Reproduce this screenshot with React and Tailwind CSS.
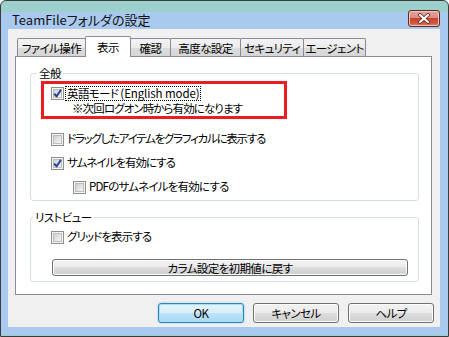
import React from 'react';

const font = "font-['Noto_Sans_CJK_JP','Noto_Sans_CJK_SC',sans-serif] [font-feature-settings:'palt']";

const CheckBox = ({ checked }) => (
  <span className="relative flex h-[13px] w-[13px] shrink-0 items-center justify-center border border-[#8f8f8f] bg-[#f4f4f4]">
    <span className="h-[9px] w-[9px] border border-[#bcbcbc] bg-[linear-gradient(135deg,#cfcfcf,#f7f7f7)]" />
    {checked && (
      <svg className="absolute left-0 top-0" width="11" height="11" viewBox="0 0 11 11">
        <path d="M2.2 5.6 L4.6 8.4 L9 1.8" stroke="#24408e" strokeWidth="1.9" fill="none" strokeLinejoin="round" />
      </svg>
    )}
  </span>
);

const Row = ({ checked, label, indent, textClass = '' }) => (
  <div className={`flex h-[24px] items-center ${indent ? 'pl-[22px]' : ''}`}>
    <CheckBox checked={checked} />
    <span className={`ml-[3px] whitespace-nowrap ${textClass}`}>{label}</span>
  </div>
);

const Tab = ({ label, width, active, first }) => (
  <div
    className={`flex items-start justify-center border border-b-0 border-[#898c95] rounded-t-[2px] ${first ? '' : '-ml-px'} ${
      active
        ? 'relative z-10 -mb-px h-[21px] bg-white pt-[2px]'
        : 'h-[18px] bg-[linear-gradient(#f3f3f3,#ebebeb_50%,#dcdcdc_50%,#d6d6d6)] pt-[1px]'
    }`}
    style={{ width }}
  >
    <span className="whitespace-nowrap leading-[16px]">{label}</span>
  </div>
);

const GroupBox = ({ label, labelLeft, className, children }) => (
  <div className={`relative ml-[14px] w-[389px] rounded-[3px] border border-[#d5dfe5] pl-[20px] ${className}`}>
    <span className={`absolute -top-[9px] bg-white px-[2px] leading-[16px] ${labelLeft}`}>{label}</span>
    {children}
  </div>
);

const DialogButton = ({ children, primary }) => (
  <button
    type="button"
    className={`flex h-[20px] w-[86px] items-center justify-center rounded-[3px] border leading-[16px] ${
      primary
        ? 'border-[#3c7fb1] bg-[linear-gradient(#e5f4fc,#d7eefb_50%,#bde4f8_50%,#a9d8f3)] shadow-[inset_0_0_0_1px_#9fe0ff,0_0_2px_#5cc8ff]'
        : 'border-[#707070] bg-[linear-gradient(#f2f2f2,#ebebeb_50%,#dddddd_50%,#cfcfcf)] shadow-[inset_0_0_0_1px_#fcfcfc]'
    }`}
  >
    {children}
  </button>
);

export default function App() {
  return (
    <div className={`h-[337px] w-[449px] overflow-hidden text-[11.5px] tracking-[-0.6px] text-black ${font}`}>
      <div className="flex h-full w-full flex-col rounded-t-[6px] border border-[#3b3b3b] bg-[linear-gradient(#9dd0cc_0,#9dd0cc_11px,#a9c9ef_11px)]">
        {/* title bar */}
        <div className="flex h-[28px] shrink-0 items-start justify-between pl-[11px] pr-[8px]">
          <span className="mt-[10px] whitespace-nowrap text-[13px] leading-[17px] tracking-normal text-[#111]">
            TeamFileフォルダの設定
          </span>
          <div className="mt-[9px] flex h-[17px] w-[32px] items-center justify-center rounded-[3px] border border-[#5e2a28] bg-[linear-gradient(#e2a59e,#d88b82_45%,#c6452f_50%,#d1553a_80%,#e08a6a)] shadow-[inset_0_0_0_1px_#efc4bd]">
            <svg width="14" height="11" viewBox="0 0 14 11">
              <path d="M3 2 L11 9 M11 2 L3 9" stroke="#5a2a26" strokeWidth="3.6" strokeLinecap="round" />
              <path d="M3 2 L11 9 M11 2 L3 9" stroke="#ffffff" strokeWidth="2" strokeLinecap="round" />
            </svg>
          </div>
        </div>

        <div className="flex h-[298px] shrink-0">
          <div className="w-[7px] shrink-0" />
          {/* client area */}
          <div className="flex w-[432px] shrink-0 flex-col bg-[#f0f0f0] pl-[7px]">
            <div className="ml-[2px] mt-[7px] flex h-[20px] items-end">
              <Tab first label="ファイル操作" width={69} />
              <Tab active label="表示" width={46} />
              <Tab label="確認" width={41} />
              <Tab label="高度な設定" width={71} />
              <Tab label="セキュリティ" width={64} />
              <Tab label="エージェント" width={63} />
            </div>

            <div className="h-[239px] w-[417px] border border-[#898c95] bg-white">
              <GroupBox label="全般" labelLeft="left-[6px]" className="mt-[16px] pb-[1px] pt-[7px]">
                <div className="-ml-[10px] h-[38px] w-[246px] border-[3px] border-[#ec1c24] pl-[7px] pt-[1px]">
                  <div className="flex h-[16px] items-center">
                    <CheckBox checked />
                    <span className="ml-[1px] whitespace-nowrap border border-dotted border-black px-[1px] leading-[13px]">
                      英語モード <span className="tracking-[-0.1px]">(English mode)</span>
                    </span>
                  </div>
                  <div className="h-[14px] whitespace-nowrap pl-[21px] leading-[14px] tracking-[-0.9px]">※次回ログオン時から有効になります</div>
                </div>
                <div className="mt-[8px]">
                  <Row label="ドラッグしたアイテムをグラフィカルに表示する" textClass="tracking-[-1.25px]" />
                  <Row checked label="サムネイルを有効にする" textClass="tracking-[-1px]" />
                  <Row indent label="PDFのサムネイルを有効にする" textClass="tracking-[-0.8px]" />
                </div>
              </GroupBox>

              <GroupBox label="リストビュー" labelLeft="left-[2px]" className="mt-[16px] pb-[5px] pt-[7px]">
                <Row label="グリッドを表示する" textClass="tracking-[-0.9px]" />
                <button
                  type="button"
                  className="ml-[1px] mt-[10px] flex h-[17px] w-[356px] items-center justify-center rounded-[3px] border border-[#707070] bg-[linear-gradient(#f2f2f2,#ebebeb_50%,#dddddd_50%,#cfcfcf)] leading-[14px] shadow-[inset_0_0_0_1px_#fcfcfc]"
                >
                  カラム設定を初期値に戻す
                </button>
              </GroupBox>
            </div>

            <div className="mt-[8px] flex justify-end gap-[9px] pr-[6px]">
              <DialogButton primary>OK</DialogButton>
              <DialogButton>キャンセル</DialogButton>
              <DialogButton>ヘルプ</DialogButton>
            </div>
          </div>
          <div className="w-[8px] shrink-0" />
        </div>
        <div className="grow border-b border-[#9dd0cc]" />
      </div>
    </div>
  );
}
